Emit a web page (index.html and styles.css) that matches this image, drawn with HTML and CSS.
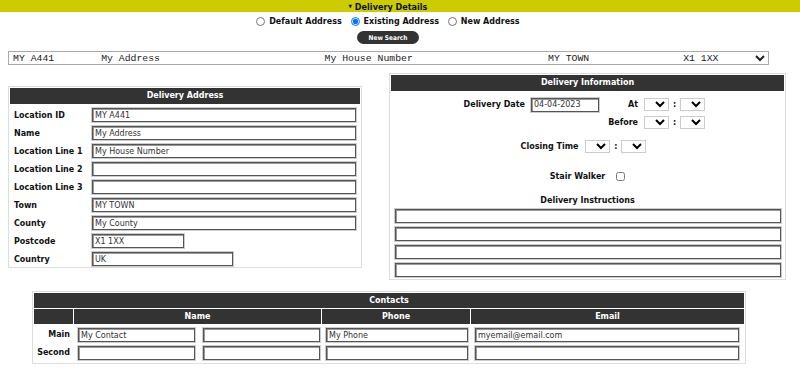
FILE: index.html
```html
<!DOCTYPE html>
<html>
<head>
<meta charset="utf-8">
<link rel="stylesheet" href="styles.css">
</head>
<body>
<div class="topbar"><span class="caret">&#9660;</span> Delivery Details</div>
<div class="radios">
  <label class="radio"><input type="radio" name="addr"> Default Address</label>
  <label class="radio"><input type="radio" name="addr" checked> Existing Address</label>
  <label class="radio"><input type="radio" name="addr"> New Address</label>
</div>
<div class="btnrow"><button class="newsearch">New Search</button></div>
<div class="selrow">
  <select class="addrsel">
    <option>MY A441&nbsp;&nbsp;&nbsp;&nbsp;&nbsp;&nbsp;&nbsp;&nbsp;My Address&nbsp;&nbsp;&nbsp;&nbsp;&nbsp;&nbsp;&nbsp;&nbsp;&nbsp;&nbsp;&nbsp;&nbsp;&nbsp;&nbsp;&nbsp;&nbsp;&nbsp;&nbsp;&nbsp;&nbsp;&nbsp;&nbsp;&nbsp;&nbsp;&nbsp;&nbsp;&nbsp;&nbsp;My House Number&nbsp;&nbsp;&nbsp;&nbsp;&nbsp;&nbsp;&nbsp;&nbsp;&nbsp;&nbsp;&nbsp;&nbsp;&nbsp;&nbsp;&nbsp;&nbsp;&nbsp;&nbsp;&nbsp;&nbsp;&nbsp;&nbsp;&nbsp;MY TOWN&nbsp;&nbsp;&nbsp;&nbsp;&nbsp;&nbsp;&nbsp;&nbsp;&nbsp;&nbsp;&nbsp;&nbsp;&nbsp;&nbsp;&nbsp;&nbsp;X1 1XX</option>
  </select>
</div>
<div class="panels">
  <div class="panel addr">
    <div class="phead">Delivery Address</div>
    <div class="addrgrid">
      <span class="lbl">Location ID</span><input class="txt full" value="MY A441">
      <span class="lbl">Name</span><input class="txt full" value="My Address">
      <span class="lbl">Location Line 1</span><input class="txt full" value="My House Number">
      <span class="lbl">Location Line 2</span><input class="txt full" value="">
      <span class="lbl">Location Line 3</span><input class="txt full" value="">
      <span class="lbl">Town</span><input class="txt full" value="MY TOWN">
      <span class="lbl">County</span><input class="txt full" value="My County">
      <span class="lbl">Postcode</span><input class="txt pc" value="X1 1XX">
      <span class="lbl">Country</span><input class="txt ctry" value="UK">
    </div>
  </div>
  <div class="panel info">
    <div class="phead">Delivery Information</div>
    <div class="daterows">
      <div class="drow">
        <span class="lbl dlbl">Delivery Date</span>
        <input class="txt date" value="04-04-2023">
        <span class="lbl tlbl">At</span>
        <select class="tsel"><option></option></select>
        <span class="lbl colon">:</span>
        <select class="tsel"><option></option></select>
      </div>
      <div class="drow second">
        <span class="lbl tlbl">Before</span>
        <select class="tsel"><option></option></select>
        <span class="lbl colon">:</span>
        <select class="tsel"><option></option></select>
      </div>
    </div>
    <div class="closerow">
      <span class="lbl clabel">Closing Time</span>
      <select class="tsel"><option></option></select>
      <span class="lbl colon">:</span>
      <select class="tsel"><option></option></select>
    </div>
    <div class="stairrow">
      <span class="lbl">Stair Walker</span>
      <input type="checkbox" class="chk">
    </div>
    <div class="instrtitle">Delivery Instructions</div>
    <div class="instr">
      <input class="txt wide">
      <input class="txt wide">
      <input class="txt wide">
      <input class="txt wide">
    </div>
  </div>
</div>
<div class="panel contacts">
  <div class="cgrid">
    <div class="chead span">Contacts</div>
    <div class="chead"></div>
    <div class="chead">Name</div>
    <div class="chead">Phone</div>
    <div class="chead">Email</div>

    <div class="clbl">Main</div>
    <div class="ccell"><input class="txt nm" value="My Contact"><input class="txt nm"></div>
    <div class="ccell"><input class="txt ph" value="My Phone"></div>
    <div class="ccell"><input class="txt em" value="myemail@email.com"></div>

    <div class="clbl">Second</div>
    <div class="ccell"><input class="txt nm"><input class="txt nm"></div>
    <div class="ccell"><input class="txt ph"></div>
    <div class="ccell"><input class="txt em"></div>
  </div>
</div>
</body>
</html>
```
FILE: styles.css
```css
* { box-sizing: border-box; }
body {
  margin: 0;
  background: #fff;
  font-family: "DejaVu Sans", Verdana, sans-serif;
  font-size: 8px;
  color: #111;
}
.topbar {
  background: #cccc00;
  height: 12px;
  line-height: 12px;
  text-align: center;
  padding-right: 24px;
  font-family: "DejaVu Sans Condensed", "DejaVu Sans", sans-serif;
  font-stretch: condensed;
  font-weight: bold;
  font-size: 9px;
  color: #111;
}
.caret { font-size: 5px; vertical-align: 2px; }
.radios {
  display: flex;
  justify-content: center;
  gap: 9px;
  margin-top: 4px;
  height: 11px;
  padding-right: 24px;
}
.radio {
  display: flex;
  align-items: center;
  font-weight: bold;
  font-size: 8px;
  white-space: pre;
}
.radio input {
  width: 9px;
  height: 9px;
  margin: 0 1px 0 0;
}
.btnrow {
  display: flex;
  justify-content: center;
  margin-top: 4px;
  padding-right: 24px;
}
.newsearch {
  width: 62px;
  height: 13px;
  border: none;
  border-radius: 7px;
  background: #333;
  color: #fff;
  font-family: "DejaVu Sans Condensed", "DejaVu Sans", sans-serif;
  font-stretch: condensed;
  font-weight: bold;
  font-size: 6.5px;
  padding: 0;
}
.selrow { padding: 7px 0 0 8px; }
.addrsel {
  width: 761px;
  height: 14px;
  border: 1px solid #aaa;
  border-radius: 0;
  background: #fff;
  font-family: "Liberation Mono", "Courier New", monospace;
  font-size: 9.8px;
  color: #222;
  padding: 0;
  margin: 0;
}
.panels {
  display: flex;
  align-items: flex-start;
  margin-top: 8px;
}
.panel {
  border: 1px solid #ddd;
  padding: 1px;
  background: #fff;
}
.phead {
  background: #333;
  color: #fff;
  font-weight: bold;
  font-size: 8px;
  height: 16px;
  line-height: 16px;
  text-align: center;
}
.addr {
  margin: 13px 0 0 8px;
  width: 354px;
}
.addrgrid {
  display: grid;
  grid-template-columns: 78px 264px;
  row-gap: 4px;
  padding: 4px 4px 0 4px;
  align-items: center;
}
.lbl {
  font-weight: bold;
  font-size: 8px;
  white-space: nowrap;
}
.txt {
  height: 14px;
  margin: 0;
  border: 1px solid #555;
  box-shadow: inset 1px 1px 0 #999;
  outline: 1px solid #ccc;
  outline-offset: 0;
  padding: 0 0 0 2px;
  font-family: "DejaVu Sans", Verdana, sans-serif;
  font-size: 8px;
  color: #333;
  background: #fff;
  display: block;
  flex-shrink: 0;
}
.full { width: 264px; }
.pc { width: 92px; }
.ctry { width: 141px; }
.info {
  margin-left: 27px;
  width: 397px;
}
.daterows {
  display: flex;
  flex-direction: column;
  gap: 5px;
  padding: 7px 0 0 71px;
}
.drow {
  display: flex;
  align-items: center;
  height: 13px;
}
.drow.second { padding-left: 137px; }
.dlbl { width: 63px; text-align: right; }
.date { width: 68px; margin-left: 6px; }
.tlbl { width: 39px; text-align: right; margin-right: 6px; }
.colon { width: 11px; text-align: center; flex-shrink: 0; }
.tsel {
  width: 25px;
  min-width: 25px;
  max-width: 25px;
  height: 13px;
  margin: 0;
  border: 1px solid #ccc;
  border-radius: 0;
  background: #fff;
  font-size: 8px;
  padding: 0;
  flex-shrink: 0;
}
.closerow {
  display: flex;
  justify-content: center;
  align-items: center;
  margin-top: 11px;
  padding-right: 8px;
}
.clabel { margin-right: 7px; }
.stairrow {
  display: flex;
  justify-content: center;
  align-items: center;
  margin-top: 17px;
  height: 13px;
}
.chk {
  width: 9px;
  height: 9px;
  margin: 0 0 0 11px;
}
.instrtitle {
  text-align: center;
  font-weight: bold;
  margin-top: 13px;
  height: 10px;
  line-height: 10px;
}
.instr {
  display: flex;
  flex-direction: column;
  gap: 4px;
  padding: 3px 3px 1px 4px;
}
.wide { width: 386px; }
.contacts {
  margin: 11px 0 0 32px;
  width: 714px;
}
.cgrid {
  display: grid;
  grid-template-columns: 39px 247px 148px 273px;
  column-gap: 1px;
  row-gap: 1px;
  padding-bottom: 2px;
}
.chead {
  background: #333;
  color: #fff;
  font-weight: bold;
  height: 15px;
  line-height: 15px;
  text-align: center;
}
.span { grid-column: 1 / 5; }
.clbl {
  font-weight: bold;
  text-align: right;
  padding-right: 3px;
  line-height: 14px;
  margin-top: 3px;
}
.ccell {
  display: flex;
  gap: 8px;
  padding: 3px 0 0 4px;
}
.nm { width: 117px; }
.ph { width: 142px; }
.em { width: 264px; }
```
